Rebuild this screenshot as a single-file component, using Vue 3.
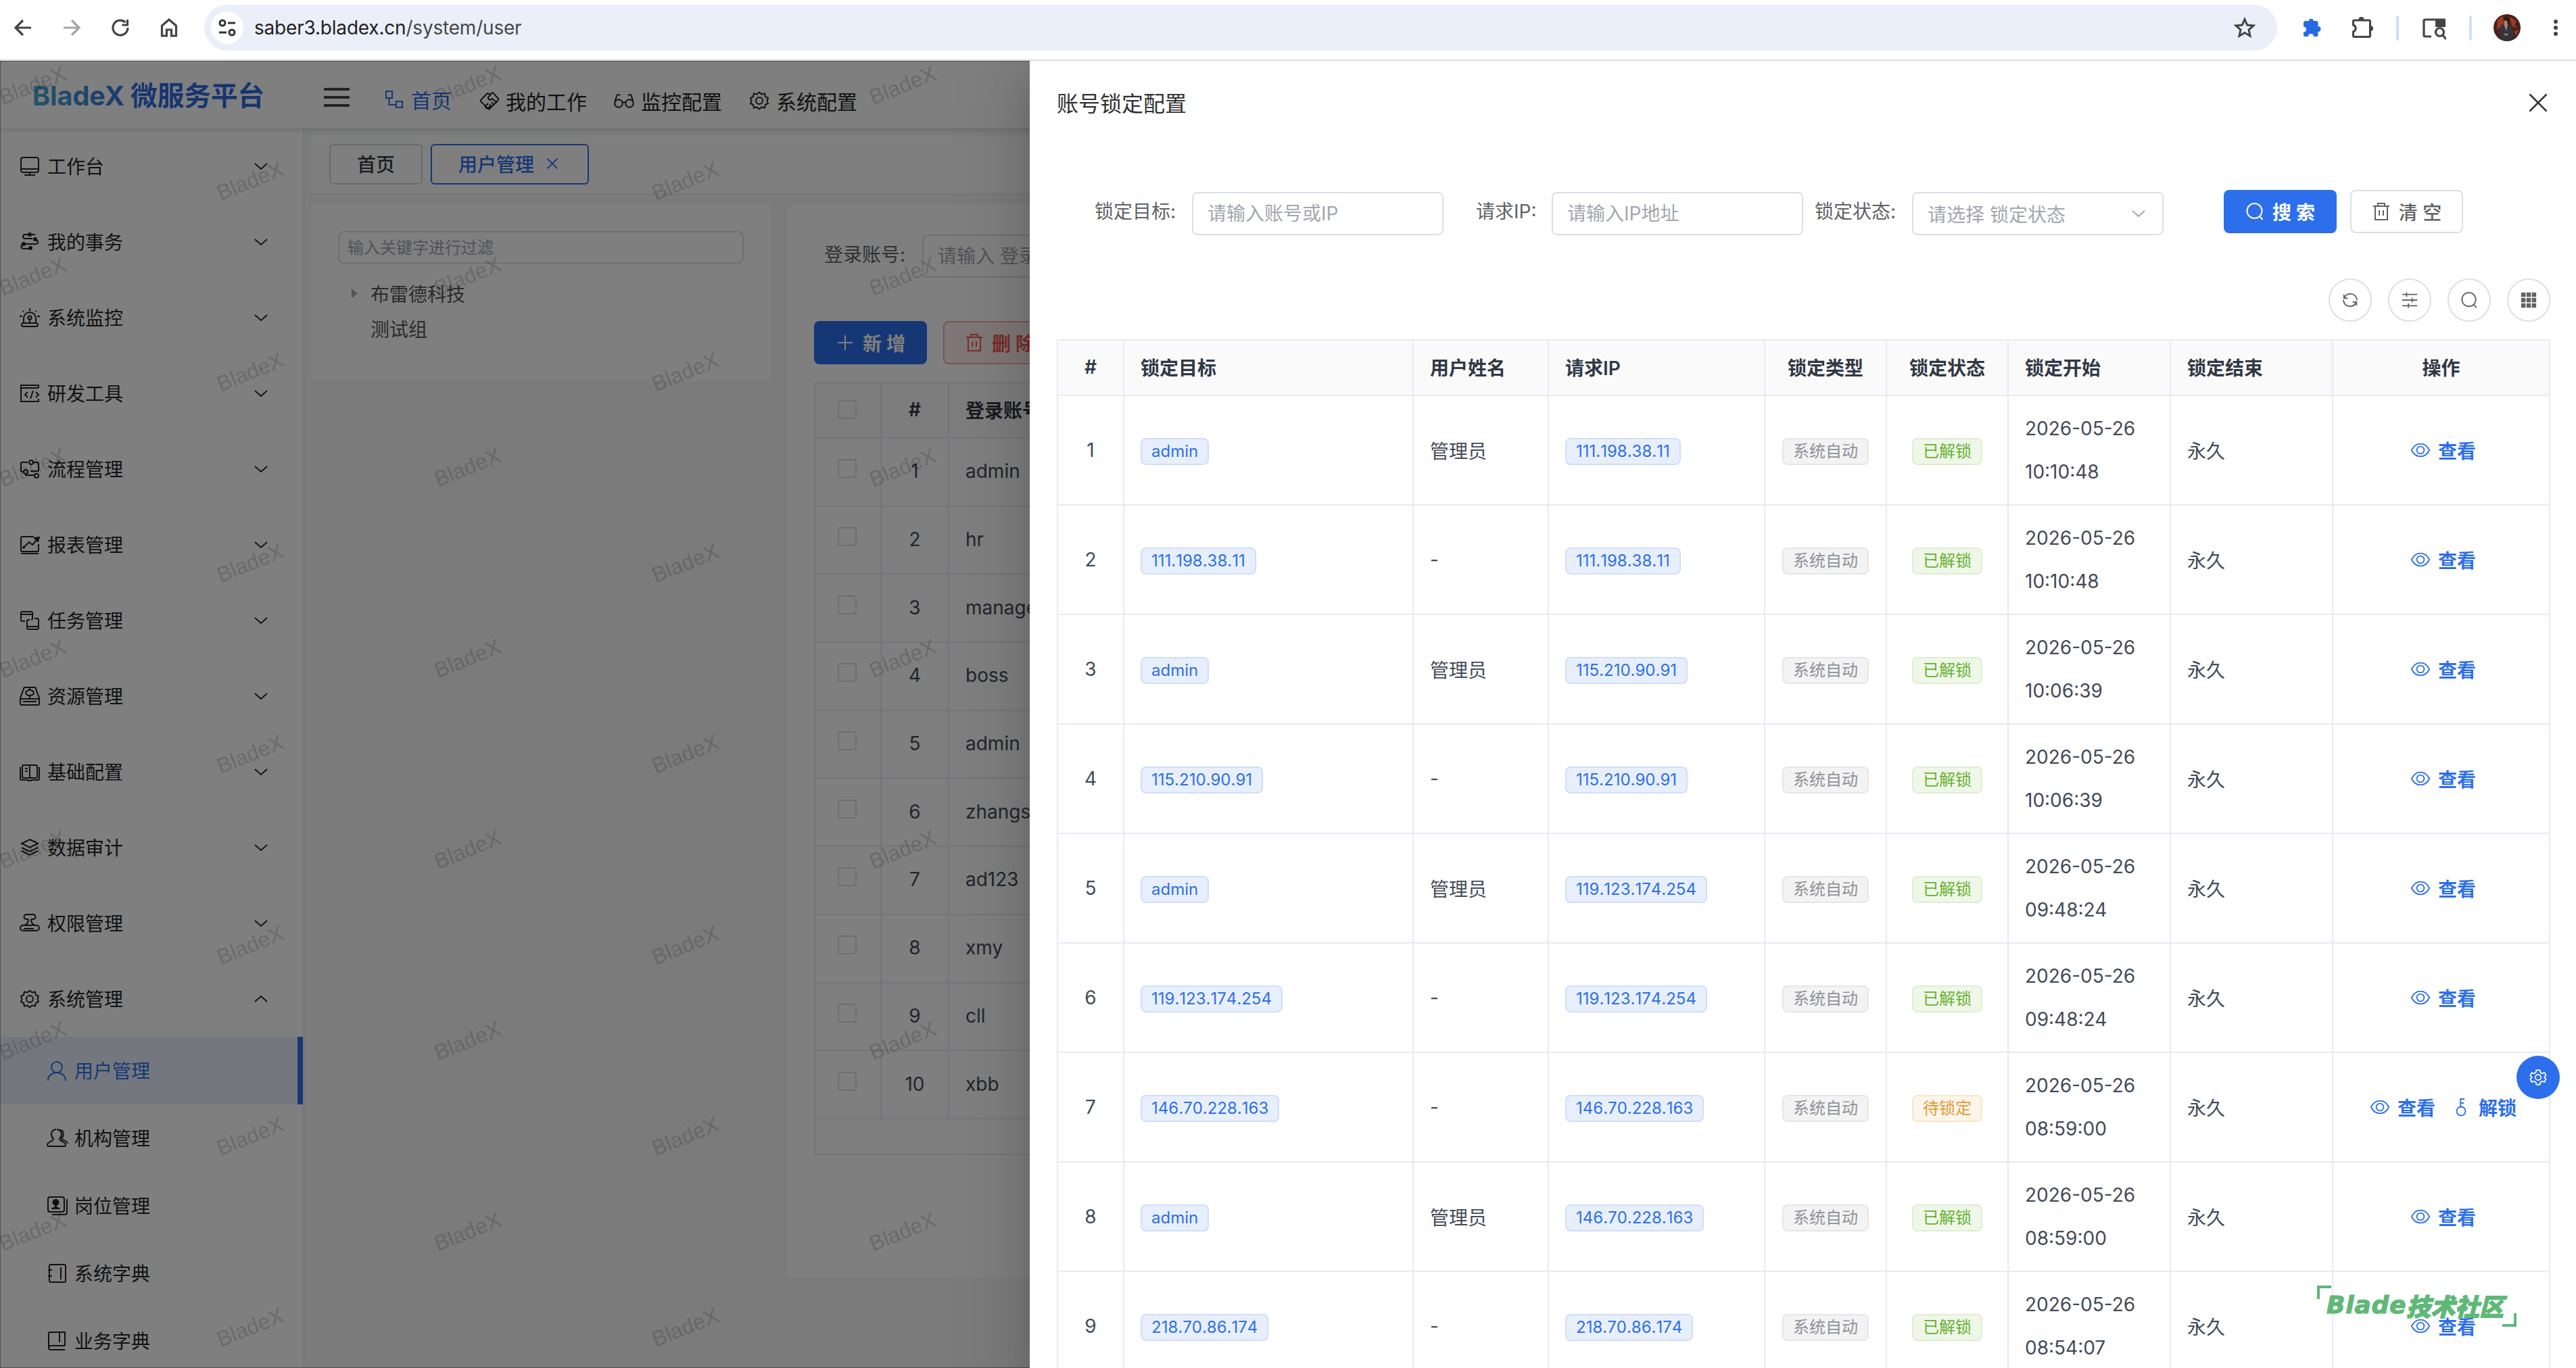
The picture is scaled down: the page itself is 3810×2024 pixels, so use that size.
<script setup>
import { ref } from 'vue';

//svg bodies of the icons, all drawn on a 28x28 grid
const icons = {
  monitor: '<rect x="1" y="1" width="26" height="22" rx="3"/><path d="M1 18h26M14 23v3M6 27h16"/>',
  affairs: '<path d="M22 3H7a3 3 0 0 0 0 6h11M22 10c5 2 6 7 0 7H6c-6 0-6 7 0 7h8"/><g fill="currentColor" stroke="none"><circle cx="14" cy="3" r="3"/><circle cx="22" cy="10" r="3"/><circle cx="5" cy="17" r="3"/><circle cx="15" cy="23" r="3"/></g>',
  alarm: '<path d="M5 22V15a9 9 0 0 1 18 0v7M14 0v4M-1 12h4M25 12h4M14 17v5"/><circle cx="14" cy="14" r="2.6"/><rect x="2" y="22" width="24" height="5" rx="2.5"/><path d="M4 4l1 1M24 4l-1 1" stroke-width="2.6"/>',
  code: '<path d="M27 6V2H1v24h26v-4M1 6h26M11 12l-4 4 4 4M19 10l-4 12M23 12l4 4-4 4"/>',
  flow: '<path d="M11 4H3a2 2 0 0 0-2 2v10a2 2 0 0 0 2 2h2M18 4h7a2 2 0 0 1 2 2v9a2 2 0 0 1-2 2H15M8 20v3h13"/><circle cx="16" cy="4" r="3"/><circle cx="8" cy="18" r="3"/><circle cx="24" cy="24" r="3"/>',
  report: '<path d="M20 2H3a2 2 0 0 0-2 2v18a2 2 0 0 0 2 2h22a2 2 0 0 0 2-2v-9M1 27h26M5 18l8-8 5 4 7-8"/><path d="M21 4l7-1-2 6z" fill="currentColor"/><circle cx="5" cy="18" r="1" />',
  task: '<path d="M7 15H3a2 2 0 0 1-2-2V3a2 2 0 0 1 2-2h13a2 2 0 0 1 2 2v8a2 2 0 0 1-2 2M1 5h17M21 11h4a2 2 0 0 1 2 2v12a2 2 0 0 1-2 2H12a2 2 0 0 1-2-2V15a2 2 0 0 1 2-2h2M10 23h17"/>',
  resource: '<path d="M5 3a2 2 0 0 1 2-2h14a2 2 0 0 1 2 2l5 14v8a2 2 0 0 1-2 2H2a2 2 0 0 1-2-2v-8zM0 18h28M4 22h20M14 13v5M14 1v3"/><ellipse cx="14" cy="9" rx="6" ry="4"/>',
  book: '<path d="M14 4v20M14 4H5a2 2 0 0 0-2 2v15a2 2 0 0 0 2 2h18a2 2 0 0 0 2-2V6a2 2 0 0 0-2-2zM0 7v17a2 2 0 0 0 2 2h9l1 1h4l1-1h9a2 2 0 0 0 2-2V7M7 9h4M7 13h4"/>',
  layers: '<path d="M14 2l12 6-12 6L2 8zM2 14l12 6 12-6M2 19l12 6 12-6"/>',
  stamp: '<path d="M12 8H9a3.500 3.500 0 0 1 0-7h10a3.500 3.500 0 0 1 0 7h-3M12 8c0 5-2 8-6 9M16 8c0 5 2 8 6 9M4 17h20a3.500 3.500 0 0 1 0 8H4a3.500 3.500 0 0 1 0-8M5 22h15"/>',
  gear: '<circle cx="14" cy="14" r="5"/><path d="M14 1.500l3.500 3 4.500-1 1 4.500 4 2-1.500 4 1.500 4-4 2-1 4.500-4.500-1L14 26.500l-3.500-3-4.500 1-1-4.500-4-2 1.500-4-1.500-4 4-2 1-4.500 4.500 1z"/>',
  user: '<circle cx="14" cy="9" r="8"/><path d="M1 29c0-16 26-16 26 0"/>',
  org: '<path d="M13 1c-4 0-7 3-7 7 0 3 1 5 3 7 0 4-9 4-9 9 0 2 2 2 3 2h20c3 0 4 0 4-2 0-5-9-5-9-9 2-2 3-4 3-7 0-4-3-7-7-7M19 2c6 0 6 9 2 12 0 3 9 4 9 8"/>',
  post: '<rect x="1" y="1" width="24" height="22" rx="3"/><path d="M29 4v20a3 3 0 0 1-3 3H7"/><g fill="currentColor" stroke="none"><circle cx="12.500" cy="9" r="5"/><path d="M11 12h3v4c3 0 5 1 5 3H6c0-2 2-3 5-3z"/></g>',
  dict: '<rect x="3" y="1" width="24" height="26" rx="2"/><path d="M20 5v18M1 9h6M1 18h6"/>',
  dict2: '<path d="M26 21V1H4a2 2 0 0 0-2 2v21a3 3 0 0 0 3 3h21M2 24a3 3 0 0 1 3-3h21M18 1v15"/>',
  tree: '<rect x="2" y="2" width="9" height="10"/><rect x="17" y="17" width="9" height="9"/><path d="M6.500 12v10H17"/>',
  hand: '<path d="M14 27L2 15a2 2 0 0 1 0-2L12 3l4 2M14 27l11-11 3-3a2 2 0 0 0 0-2l-7-8a2 2 0 0 0-3 0l-5 6c0 4 3 5 6 2l7 6M9 22l4-4M13 25l4-4M11 26l-3-4M18 23l-3-4M21 20l-3-4"/>',
  glasses: '<circle cx="6" cy="18" r="5.800"/><circle cx="22" cy="18" r="5.800"/><path d="M12 17c1-1.500 3-1.500 4 0M.5 16L3 7c.5-2 3-3 5-1M27.500 16L25 7c-.5-2-3-3-5-1"/>',
  down: '<path d="M5 10l9 8 9-8"/>',
  up: '<path d="M5 18l9-8 9 8"/>',
  close: '<path d="M6 6l16 16M22 6L6 22"/>',
  plus: '<path d="M14 3v22M3 14h22"/>',
  trash: '<path d="M2 6h24M9 6V2h10v4M5 6v20h18V6M11 12v8M17 12v8"/>',
  search: '<circle cx="13.500" cy="13" r="11"/><path d="M21.500 21.500l4 4.500"/>',
  refresh: '<path d="M4 5v6h6M4.500 10.500C9 1 23 2 25 14M24 23v-6h-6M23.500 17.500C19 27 5 26 3 14"/>',
  sliders: '<path d="M2 5h24M2 14h24M2 23h24M9 1.500v7M18 10.500v7M12 19.500v7"/>',
  grid: '<g fill="currentColor" stroke="none"><path d="M2 2h7v7H2zM10.500 2h7v7h-7zM19 2h7v7h-7zM2 10.500h7v7H2zM10.500 10.500h7v7h-7zM19 10.500h7v7h-7zM2 19h7v7H2zM10.500 19h7v7h-7zM19 19h7v7h-7z"/></g>',
  eye: '<path d="M.8 14C7 1.500 21 1.500 27.200 14 21 26.500 7 26.500.8 14z"/><circle cx="14" cy="14" r="5.400"/>',
  key: '<circle cx="14" cy="20" r="6.500"/><path d="M13.200 13.500V2h6M13.200 8h5"/>',
  cog: '<circle cx="14" cy="14" r="4.800"/><path d="M11 1.500h6l1 4 3 1.800 4-1.300 2.500 5-2.700 3 2.700 3-2.500 5-4-1.300-3 1.800-1 4h-6l-1-4-3-1.800-4 1.300-2.500-5 2.700-3-2.700-3 2.500-5 4 1.300 3-1.800z"/>',
}

const navs = [
  { icon: 'tree', text: '首页', active: true },
  { icon: 'hand', text: '我的工作' },
  { icon: 'glasses', text: '监控配置' },
  { icon: 'gear', text: '系统配置' },
]

const menus = [
  { icon: 'monitor', text: '工作台' },
  { icon: 'affairs', text: '我的事务' },
  { icon: 'alarm', text: '系统监控' },
  { icon: 'code', text: '研发工具' },
  { icon: 'flow', text: '流程管理' },
  { icon: 'report', text: '报表管理' },
  { icon: 'task', text: '任务管理' },
  { icon: 'resource', text: '资源管理' },
  { icon: 'book', text: '基础配置' },
  { icon: 'layers', text: '数据审计' },
  { icon: 'stamp', text: '权限管理' },
  { icon: 'gear', text: '系统管理', open: true },
]

const subMenus = [
  { icon: 'user', text: '用户管理' },
  { icon: 'org', text: '机构管理' },
  { icon: 'post', text: '岗位管理' },
  { icon: 'dict', text: '系统字典' },
  { icon: 'dict2', text: '业务字典' },
]
const activeMenu = ref('用户管理')

const users = ['admin', 'hr', 'manager', 'boss', 'admin', 'zhangsan', 'ad123', 'xmy', 'cll', 'xbb']

const filterText = ref('')
const account = ref('')
const target = ref('')
const ip = ref('')

const heads = ['#', '锁定目标', '用户姓名', '请求IP', '锁定类型', '锁定状态', '锁定开始', '锁定结束', '操作']
const locks = ref([
  { target: 'admin', name: '管理员', ip: '111.198.38.11', time: '10:10:48' },
  { target: '111.198.38.11', name: '-', ip: '111.198.38.11', time: '10:10:48' },
  { target: 'admin', name: '管理员', ip: '115.210.90.91', time: '10:06:39' },
  { target: '115.210.90.91', name: '-', ip: '115.210.90.91', time: '10:06:39' },
  { target: 'admin', name: '管理员', ip: '119.123.174.254', time: '09:48:24' },
  { target: '119.123.174.254', name: '-', ip: '119.123.174.254', time: '09:48:24' },
  { target: '146.70.228.163', name: '-', ip: '146.70.228.163', time: '08:59:00', locked: true },
  { target: 'admin', name: '管理员', ip: '146.70.228.163', time: '08:59:00' },
  { target: '218.70.86.174', name: '-', ip: '218.70.86.174', time: '08:54:07' },
])

//unlock a pending row
const unlock = (row) => {
  row.locked = false
}
</script>

<template>
  <div class="page">
    <div class="browser">
      <svg class="bi" viewBox="0 0 28 28"><path d="M26 14H4M14 3L3 14l11 11" /></svg>
      <svg class="bi off" viewBox="0 0 28 28"><path d="M2 14h22M14 3l11 11-11 11" /></svg>
      <svg class="bi" viewBox="0 0 28 28"><path d="M25 14a11 11 0 1 1-3.500-8M24.500 2v8h-8" /></svg>
      <svg class="bi" viewBox="0 0 28 28"><path d="M3.500 26V11L14 2l10.500 9v15h-7v-9h-7v9z" /></svg>
      <div class="address">
        <div class="tune">
          <svg viewBox="0 0 28 28"><circle cx="7" cy="7" r="4" /><circle cx="21" cy="21" r="4" /><path d="M15 7h11M2 21h11" /></svg>
        </div>
        <div class="url">saber3.bladex.cn<span>/system/user</span></div>
        <svg class="star" viewBox="0 0 34 34"><path d="M17 4.500l3.700 8.600 9.300.8-7 6.200 2 9.100-8-4.800-8 4.800 2-9.100-7-6.200 9.300-.8z" /></svg>
      </div>
      <svg class="puzzle" viewBox="0 0 32 32"><path d="M3 9a3 3 0 0 1 3-3h5a3.300 3.300 0 0 1 6.600 0H22a2.500 2.500 0 0 1 2.500 2.500V14a4 4 0 0 1 0 8v5a2 2 0 0 1-2 2H18a4 4 0 0 0-8 0H5a2 2 0 0 1-2-2v-4.500a4 4 0 0 0 0-8z" /></svg>
      <svg class="puzzle2" viewBox="0 0 32 32"><path d="M4 6h22a1.500 1.500 0 0 1 1.500 1.500V29a1.500 1.500 0 0 1-1.500 1.500H4A1.500 1.500 0 0 1 2.500 29v-6c5-2 5-8 0-10V7.500A1.500 1.500 0 0 1 4 6z" /><g class="knob"><path d="M10.500 5a4 4 0 0 1 8 0zM28 14a4 4 0 0 1 0 8z" /></g></svg>
      <i class="divider"></i>
      <svg class="tabsearch" viewBox="0 0 36 36"><path d="M14 31H5a2 2 0 0 1-2-2V8a2 2 0 0 1 2-2h28v8" /><path class="knob" d="M20 5h13a2 2 0 0 1 2 2v10H20z" /><circle cx="26.500" cy="24.500" r="6" /><path d="M31 29l5 6" /></svg>
      <i class="divider d2"></i>
      <svg class="avatar" viewBox="0 0 40 40">
        <circle cx="20" cy="20" r="20" fill="#4a2119" />
        <path d="M6 8l8-5 2 12-11 8zM24 4l10 6-3 6 6 5-10-4zM30 26l7-3-3 9z" fill="#9c3c27" />
        <path d="M11 16l7-2 8 3 5 15-7 7-12-1-4-10z" fill="#33353b" />
        <path d="M15 7c2-4 7-3 8 1l-1 6-5 2z" fill="#2a1815" />
        <path d="M16 9l4 1 1 6-2 9-3-8zM15 28l8 2-5 2z" fill="#b08572" />
      </svg>
      <svg class="more" viewBox="0 0 8 28"><circle cx="4" cy="5" r="3" /><circle cx="4" cy="14" r="3" /><circle cx="4" cy="23" r="3" /></svg>
    </div>

    <div class="stage">
      <header>
        <div class="logo"><span>BladeX 微服务平台</span></div>
        <div class="burger"><i></i><i></i><i></i></div>
        <nav>
          <a v-for="n in navs" :key="n.text" :class="{ active: n.active }">
            <svg class="icon" viewBox="0 0 28 28" v-html="icons[n.icon]"></svg>
            <span>{{ n.text }}</span>
          </a>
        </nav>
      </header>

      <div class="body">
        <aside>
          <div v-for="m in menus" :key="m.text" class="item">
            <svg class="icon" viewBox="0 0 28 28" v-html="icons[m.icon]"></svg>
            <span>{{ m.text }}</span>
            <svg class="icon arrow" viewBox="0 0 28 28" v-html="m.open ? icons.up : icons.down"></svg>
          </div>
          <div v-for="s in subMenus" :key="s.text" class="item sub" :class="{ active: s.text == activeMenu }" @click="activeMenu = s.text">
            <svg class="icon" viewBox="0 0 28 28" v-html="icons[s.icon]"></svg>
            <span>{{ s.text }}</span>
          </div>
        </aside>

        <main>
          <div class="tabs">
            <div class="tab">首页</div>
            <div class="tab current">用户管理 <svg class="icon" viewBox="0 0 28 28" v-html="icons.close"></svg></div>
          </div>
          <div class="cards">
            <div class="card depts">
              <input class="filter" v-model="filterText" placeholder="输入关键字进行过滤">
              <div class="node"><i class="caret"></i>布雷德科技</div>
              <div class="node"><i class="caret none"></i>测试组</div>
            </div>
            <div class="card list">
              <div class="query">
                <label>登录账号:</label>
                <input class="field" v-model="account" placeholder="请输入 登录账号">
              </div>
              <div class="btns">
                <button class="btn primary"><svg class="icon" viewBox="0 0 28 28" v-html="icons.plus"></svg>新 增</button>
                <button class="btn danger"><svg class="icon" viewBox="0 0 28 28" v-html="icons.trash"></svg>删 除</button>
              </div>
              <div class="users">
                <div class="urow uhead"><div><i class="box"></i></div><div>#</div><div>登录账号</div></div>
                <div v-for="(u, index) in users" :key="index" class="urow">
                  <div><i class="box"></i></div>
                  <div>{{ index + 1 }}</div>
                  <div>{{ u }}</div>
                </div>
                <div class="ufoot"></div>
              </div>
            </div>
          </div>
        </main>
      </div>

      <svg class="watermark">
        <defs>
          <pattern id="wm" width="643.5" height="282.7" patternUnits="userSpaceOnUse">
            <text x="0" y="0" transform="translate(48 36) rotate(-22)">BladeX</text>
            <text x="0" y="0" transform="translate(370 177.5) rotate(-22)">BladeX</text>
          </pattern>
        </defs>
        <rect width="100%" height="100%" fill="url(#wm)" />
      </svg>
      <div class="mask"></div>

      <section class="drawer">
        <div class="title">
          <span>账号锁定配置</span>
          <svg class="icon" viewBox="0 0 28 28" v-html="icons.close"></svg>
        </div>
        <div class="form">
          <label class="l1">锁定目标:</label>
          <input class="field" v-model="target" placeholder="请输入账号或IP">
          <label class="l2">请求IP:</label>
          <input class="field" v-model="ip" placeholder="请输入IP地址">
          <label class="l3">锁定状态:</label>
          <div class="field select">请选择 锁定状态<svg class="icon" viewBox="0 0 28 28" v-html="icons.down"></svg></div>
          <button class="btn primary find"><svg class="icon" viewBox="0 0 28 28" v-html="icons.search"></svg>搜 索</button>
          <button class="btn clear"><svg class="icon" viewBox="0 0 28 28" v-html="icons.trash"></svg>清 空</button>
        </div>
        <div class="tools">
          <div v-for="t in ['refresh', 'sliders', 'search', 'grid']" :key="t" class="tool">
            <svg class="icon" viewBox="0 0 28 28" v-html="icons[t]"></svg>
          </div>
        </div>
        <div class="table">
          <div class="row head">
            <div v-for="h in heads" :key="h">{{ h }}</div>
          </div>
          <div v-for="(row, index) in locks" :key="index" class="row">
            <div>{{ index + 1 }}</div>
            <div><span class="tag blue">{{ row.target }}</span></div>
            <div>{{ row.name }}</div>
            <div><span class="tag blue">{{ row.ip }}</span></div>
            <div><span class="tag gray">系统自动</span></div>
            <div><span class="tag" :class="row.locked ? 'orange' : 'green'">{{ row.locked ? '待锁定' : '已解锁' }}</span></div>
            <div class="date">2026-05-26<br>{{ row.time }}</div>
            <div>永久</div>
            <div>
              <a class="op"><svg class="icon" viewBox="0 0 28 28" v-html="icons.eye"></svg>查看</a>
              <a v-if="row.locked" class="op" @click="unlock(row)"><svg class="icon" viewBox="0 0 28 28" v-html="icons.key"></svg>解锁</a>
            </div>
          </div>
        </div>
      </section>

      <div class="setting"><svg class="icon" viewBox="0 0 28 28" v-html="icons.cog"></svg></div>
      <div class="community"><span class="latin">Blade</span><span>技术社区</span></div>
    </div>
  </div>
</template>

<style>
body {
  margin: 0;
  overflow: hidden;
}
</style>

<style scoped>
* {
  box-sizing: border-box;
}

.page {
  width: 3810px;
  height: 2024px;
  overflow: hidden;
  font-family: Inter, "Noto Sans CJK SC", sans-serif;
  font-size: 28px;
  color: #424a57;
  background: #fff;
}

svg {
  flex: none;
  fill: none;
  stroke: currentColor;
}

.icon {
  width: 28px;
  height: 28px;
  stroke-width: 2;
  overflow: visible;
}

input {
  font: inherit;
  outline: none;
  background: #fff;
}

input::placeholder {
  color: #a3a6ae;
  opacity: 1;
}

/* browser bar */
.browser {
  display: flex;
  align-items: center;
  height: 90px;
  padding: 0 26px 6px 20px;
  border-bottom: 2px solid #dcdcdc;
  color: #444;
}

.bi {
  width: 28px;
  height: 28px;
  margin-right: 44px;
  stroke-width: 3.2;
}

.off {
  color: #a5a5a5;
}

.address {
  display: flex;
  align-items: center;
  width: 3066px;
  height: 68px;
  margin-left: -6px;
  padding: 0 31px 0 10px;
  border-radius: 34px;
  background: #ebeff9;
  flex: none;
}

.tune {
  display: flex;
  align-items: center;
  justify-content: center;
  width: 48px;
  height: 48px;
  border-radius: 50%;
  background: #fff;
  color: #333;
}

.tune svg {
  width: 28px;
  height: 28px;
  stroke-width: 3;
}

.url {
  flex: 1;
  margin-left: 16px;
  font-size: 28px;
  letter-spacing: -0.2px;
  color: #1f1f1f;
}

.url span {
  color: #474747;
}

.star {
  width: 34px;
  height: 34px;
  stroke-width: 3;
}

.puzzle {
  width: 32px;
  height: 32px;
  margin-left: 36px;
  fill: #246be3;
  stroke: none;
}

.puzzle2 {
  width: 32px;
  height: 32px;
  margin-left: 42px;
  margin-bottom: 3px;
  stroke-width: 3;
}

.knob {
  fill: currentColor;
  stroke: none;
}

.divider {
  width: 4px;
  height: 37px;
  margin: 0 34px;
  border-radius: 2px;
  background: #cfdffb;
}

.d2 {
  margin-right: 32px;
}

.tabsearch {
  width: 36px;
  height: 36px;
  stroke-width: 3.2;
}

.avatar {
  width: 40px;
  height: 40px;
  stroke: none;
}

.more {
  width: 8px;
  height: 28px;
  margin-left: 48px;
  fill: #444;
  stroke: none;
}

/* page behind the drawer */
.stage {
  position: relative;
  height: 1934px;
  overflow: hidden;
  background: #f6f7f7;
}

header {
  position: relative;
  display: flex;
  align-items: center;
  height: 100px;
  background: #fff;
  box-shadow: 0 2px 6px rgba(0, 21, 41, 0.16);
  color: #222;
}

.logo {
  width: 479px;
  padding: 0 0 3px 48px;
  font-size: 40px;
  font-weight: 700;
}

.logo span {
  display: block;
  width: 342px;
  white-space: nowrap;
  letter-spacing: -0.35px;
  background: linear-gradient(90deg, #4ba6cf, #2f6be0 50%);
  background-clip: text;
  color: transparent;
}

.burger {
  display: flex;
  flex-direction: column;
  gap: 8px;
  width: 38px;
  margin-top: 7px;
}

.burger i {
  height: 4px;
  background: #444;
}

nav {
  display: flex;
  gap: 40px;
  margin: 17px 0 0 51px;
  font-size: 30px;
}

nav a {
  display: flex;
  align-items: center;
  gap: 10px;
}

nav .icon {
  width: 30px;
}

nav .active {
  color: #2d6ee9;
  padding-bottom: 4px;
}

.body {
  display: flex;
}

aside {
  width: 448px;
  height: 1834px;
  background: #fff;
  color: #222;
  box-shadow: 2px 0 6px rgba(0, 0, 0, 0.06);
}

.item {
  display: flex;
  align-items: center;
  height: 112px;
  padding: 0 48px 0 30px;
}

.item span {
  flex: 1;
  margin-left: 12px;
  padding-bottom: 2px;
}

.arrow {
  stroke-width: 1.8;
}

.sub {
  height: 100px;
  padding-left: 70px;
}

.sub.active {
  background: #e9f1fd;
  border-right: 8px solid #2d6ee9;
  color: #2d6ee9;
}

main {
  padding-left: 12px;
}

.tabs {
  display: flex;
  gap: 12px;
  width: 3300px;
  height: 84px;
  margin: 12px 0 16px;
  padding: 11px 27px;
  background: #fff;
  box-shadow: 0 2px 4px rgba(0, 0, 0, 0.06);
}

.tab {
  display: flex;
  align-items: center;
  height: 60px;
  padding: 0 39px 2px;
  border: 2px solid #cfd8d8;
  border-radius: 6px;
  font-weight: 500;
  color: #333b47;
}

.current {
  border-color: #2d6ee9;
  color: #2d6ee9;
}

.current .icon {
  width: 26px;
  height: 26px;
  margin-left: 14px;
}

.cards {
  display: flex;
  gap: 24px;
}

.card {
  background: #fff;
  border-radius: 8px;
}

.depts {
  width: 680px;
  height: 262px;
  padding: 40px;
}

.filter {
  display: block;
  width: 600px;
  height: 48px;
  margin-bottom: 18px;
  padding: 0 12px;
  border: 2px solid #dcdfe6;
  border-radius: 8px;
  font-size: 24px;
}

.node {
  display: flex;
  align-items: center;
  height: 52px;
  color: #555;
}

.caret {
  width: 28px;
  margin-left: 20px;
}

.caret::before {
  content: "";
  display: block;
  width: 0;
  border: 7px solid transparent;
  border-left: 9px solid #a8abb2;
  border-right: none;
}

.none::before {
  visibility: hidden;
}

.list {
  width: 2600px;
  height: 1588px;
  padding: 45px 40px;
}

.query {
  display: flex;
}

label {
  line-height: 61px;
  color: #606266;
  white-space: nowrap;
}

.query label {
  width: 160px;
  padding-left: 15px;
}

.field {
  width: 372px;
  height: 64px;
  padding: 0 21px;
  border: 2px solid #dcdfe6;
  border-radius: 8px;
}

.btns {
  display: flex;
  gap: 24px;
  margin: 64px 0 26px;
}

.btn {
  display: flex;
  align-items: center;
  justify-content: center;
  gap: 12px;
  width: 167px;
  height: 64px;
  padding: 0;
  border: 2px solid #dcdfe6;
  border-radius: 8px;
  background: #fff;
  font: inherit;
  font-weight: 600;
  color: #606266;
}

.primary {
  border-color: #2d6feb;
  background: #2d6feb;
  color: #fff;
}

.danger {
  border-color: #f8a9a4;
  background: #feefee;
  color: #ee5a50;
}

.users {
  border: 2px solid #e8eaf4;
  border-right: none;
}

.urow {
  display: grid;
  grid-template-columns: 98px 100px 400px;
  height: 100.7px;
  border-bottom: 2px solid #e8eaf4;
}

.urow > div {
  display: flex;
  align-items: center;
  justify-content: center;
  padding-bottom: 2px;
  border-right: 2px solid #e8eaf4;
}

.urow > div:last-child {
  justify-content: flex-start;
  padding-left: 24px;
}

.uhead {
  height: 82px;
  background: #fafafa;
  font-weight: 600;
  color: #303845;
}

.box {
  width: 28px;
  height: 28px;
  border: 2px solid #dcdfe6;
  border-radius: 4px;
  margin: 0 2px 8px 0;
}

.uhead .box {
  margin-bottom: 0;
}

.ufoot {
  height: 51px;
}

.watermark {
  position: absolute;
  inset: 0;
  width: 100%;
  height: 100%;
}

.watermark text {
  font-family: "Liberation Sans", Arial, sans-serif;
  font-size: 32px;
  text-anchor: middle;
  dominant-baseline: central;
  fill: rgba(0, 0, 0, 0.17);
  stroke: none;
}

.mask {
  position: absolute;
  inset: 0;
  background: rgba(0, 0, 0, 0.5);
}

/* drawer */
.drawer {
  position: absolute;
  top: 0;
  right: 0;
  width: 2287px;
  height: 1934px;
  background: #fff;
  box-shadow: 0 32px 96px 32px rgba(0, 0, 0, 0.08), 0 24px 64px rgba(0, 0, 0, 0.12), 0 16px 32px -16px rgba(0, 0, 0, 0.16);
}

.title {
  display: flex;
  align-items: center;
  justify-content: space-between;
  height: 124px;
  padding: 0 34px 0 40px;
  font-size: 32px;
  color: #303133;
}

.title span {
  padding-bottom: 2px;
}

.title .icon {
  width: 44px;
  height: 44px;
  stroke-width: 1.7;
}

.form {
  display: flex;
  align-items: flex-start;
  margin-top: 67px;
  padding-left: 96px;
}

.form .field {
  margin-top: 3px;
}

.form label {
  line-height: 65px;
}

.l1 {
  width: 144px;
}

.l2 {
  width: 112px;
  margin-left: 48px;
}

.l3 {
  width: 144px;
  margin-left: 17px;
}

.select {
  display: flex;
  align-items: center;
  justify-content: space-between;
  color: #a3a6ae;
}

.find {
  margin-left: 89px;
}

.clear {
  margin-left: 20px;
  font-weight: 500;
}

.tools {
  display: flex;
  justify-content: flex-end;
  gap: 24px;
  margin: 64px 38px 26px;
}

.tool {
  display: flex;
  align-items: center;
  justify-content: center;
  width: 64px;
  height: 64px;
  border: 2px solid #dcdfe6;
  border-radius: 50%;
  color: #606266;
}

.tool .icon {
  width: 26px;
  height: 26px;
}

.table {
  width: 2209px;
  margin-left: 40px;
  border-top: 2px solid #e8eaf4;
  border-left: 2px solid #e8eaf4;
}

.row {
  display: grid;
  grid-template-columns: 98px 428px 200px 320px 180px 180px 240px 240px 321px;
  height: 162px;
}

.row > div {
  display: flex;
  align-items: center;
  padding-left: 24px;
  border-right: 2px solid #e8eaf4;
  border-bottom: 2px solid #e8eaf4;
}

.row > div:nth-child(1),
.row > div:nth-child(5),
.row > div:nth-child(6),
.row > div:nth-child(9) {
  justify-content: center;
  padding-left: 0;
}

.row > div:nth-child(9) {
  gap: 24px;
}

.row:not(.head) > div:nth-child(9) {
  padding-left: 7px;
}

.head {
  height: 82px;
  background: #fafafa;
  font-weight: 600;
  color: #303845;
}

.head > div {
  padding-bottom: 3px;
}

.date {
  line-height: 64px;
}

.tag {
  height: 40px;
  margin-top: 4px;
  padding: 0 14px;
  border: 2px solid;
  border-radius: 8px;
  font-size: 24px;
  line-height: 36px;
  font-kerning: none;
}

.blue {
  color: #2d6feb;
  background: #e8effc;
  border-color: #cfdff9;
}

.gray {
  color: #8f9298;
  background: #f3f3f4;
  border-color: #e6e6e8;
}

.green {
  color: #67b12f;
  background: #eff7e9;
  border-color: #dfeed2;
}

.orange {
  color: #e29a33;
  background: #fdf5e9;
  border-color: #f9e6c8;
}

.op {
  display: flex;
  align-items: center;
  gap: 12px;
  font-weight: 600;
  color: #2d6feb;
}

.op .icon {
  stroke-width: 1.8;
}

.setting {
  position: absolute;
  top: 1472px;
  right: 24px;
  display: flex;
  align-items: center;
  justify-content: center;
  width: 64px;
  height: 64px;
  border-radius: 50%;
  background: #2d6feb;
  color: #fff;
}

.setting .icon {
  width: 24px;
  height: 24px;
}

/* corner logo, bracketed by two green angles */
.community {
  position: absolute;
  top: 1812px;
  right: 88px;
  display: flex;
  align-items: center;
  width: 295px;
  height: 61px;
  padding: 0 0 4px 14px;
  font-family: "Noto Sans CJK SC", sans-serif;
  font-size: 36px;
  line-height: 40px;
  font-weight: 900;
  font-style: italic;
  white-space: nowrap;
  color: #5fb878;
  -webkit-text-stroke: 1.2px #5fb878;
}

.community .latin {
  width: 118px;
  font-family: "DejaVu Sans", sans-serif;
  font-size: 36px;
  letter-spacing: 0.8px;
}

.community::before,
.community::after {
  content: "";
  position: absolute;
  width: 17px;
  height: 16px;
}

.community::before {
  top: 0;
  left: 0;
  border-top: 4px solid;
  border-left: 4px solid;
}

.community::after {
  right: 0;
  bottom: 0;
  border-right: 4px solid;
  border-bottom: 4px solid;
}
</style>
